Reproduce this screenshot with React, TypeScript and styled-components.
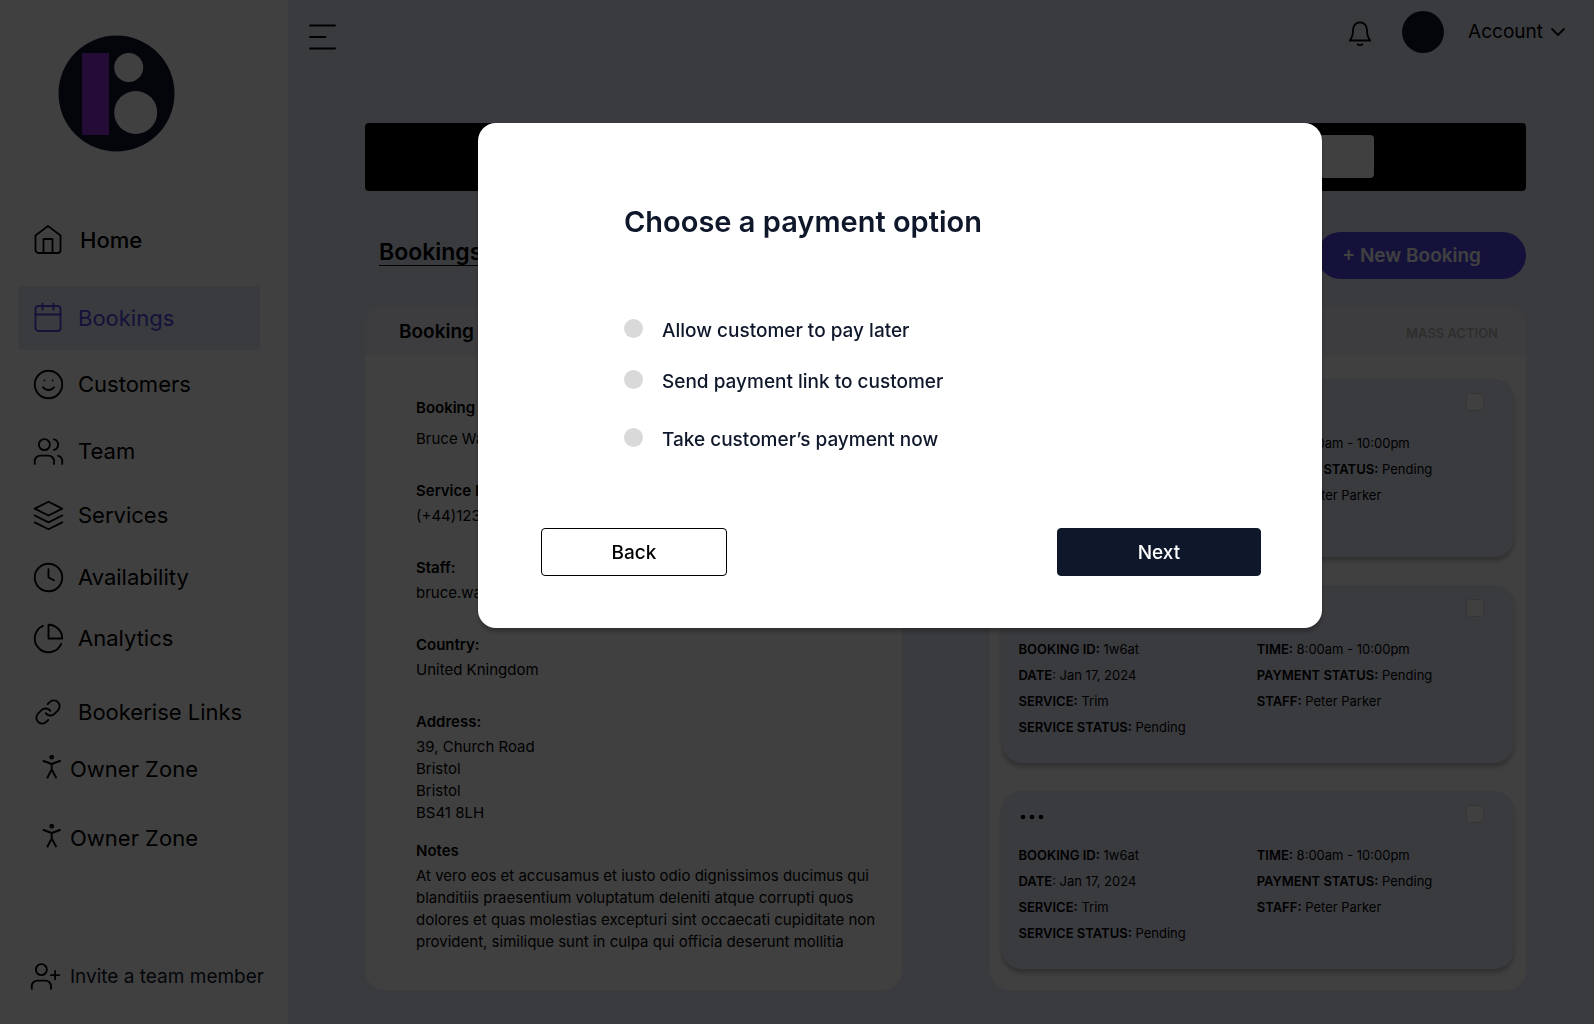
import React, { useState } from "react";
import styled, { createGlobalStyle, css } from "styled-components";
import {
  ChevronDown,
  Clock,
  Link as LinkIcon,
  Smile,
  UserPlus,
  Users,
} from "lucide-react";
import { FiLayers, FiPieChart } from "react-icons/fi";

const color = {
  page: "#e8e9fa",
  surface: "#ffffff",
  header: "#f1f3f9",
  ink: "#000000",
  navy: "#0f172a",
  indigo: "#4f46e5",
  muted: "#b8b8b8",
  radio: "#d9d9d9",
};

const GlobalStyle = createGlobalStyle`
  *, *::before, *::after { box-sizing: border-box; }
  body {
    margin: 0;
    background: ${color.page};
    color: ${color.ink};
    font-family: Inter, "Liberation Sans", sans-serif;
  }
  button { font: inherit; color: inherit; cursor: pointer; }
  h1, h2, p, dl, dd, ul { margin: 0; padding: 0; }
`;

const Shell = styled.div`
  display: flex;
  min-height: 100vh;
`;

/* ---------- Sidebar ---------- */

const Sidebar = styled.aside`
  display: flex;
  flex-direction: column;
  flex: 0 0 288px;
  padding: 35px 0 31px;
  background: ${color.surface};
`;

const LogoLink = styled.a`
  display: block;
  height: 117px;
  margin: 0 0 56px 58px;
`;

const NavList = styled.ul`
  display: grid;
  grid-template-rows: 78px 66px 67px 64px 62px 61px 74px 57px 69px 64px;
  align-items: start;
  margin: 0 28px 0 18px;
  list-style: none;
`;

const NavLink = styled.a<{ $active?: boolean; $strong?: boolean; $compact?: boolean }>`
  display: flex;
  align-items: center;
  gap: 14px;
  height: 64px;
  padding-left: 14px;
  border-radius: 4px;
  color: ${color.ink};
  font-size: 22px;
  white-space: nowrap;
  text-decoration: none;
  ${(p) =>
    p.$strong &&
    css`
      gap: 16px;
      font-weight: 500;
    `}
  ${(p) =>
    p.$active &&
    css`
      background: ${color.page};
      color: ${color.indigo};
    `}
  ${(p) =>
    p.$compact &&
    css`
      gap: 8px;
      padding-left: 24px;
    `}
`;

const NavIcon = styled.span<{ $compact?: boolean }>`
  display: flex;
  align-items: center;
  justify-content: center;
  width: ${(p) => (p.$compact ? 20 : 32)}px;
  flex: none;

  svg {
    flex: none;
  }
`;

const InviteLink = styled.a`
  display: flex;
  align-items: center;
  gap: 8px;
  margin: auto 0 0 29px;
  color: ${color.navy};
  font-size: 19px;
  white-space: nowrap;
  text-decoration: none;

  svg {
    color: ${color.ink};
  }
`;

/* ---------- Main column ---------- */

const Main = styled.div`
  display: flex;
  flex-direction: column;
  flex: 1;
  min-width: 0;
`;

const TopBar = styled.header`
  display: flex;
  align-items: center;
  justify-content: space-between;
  height: 63px;
  padding: 0 24px 0 21px;
`;

const IconButton = styled.button`
  display: flex;
  padding: 0;
  border: 0;
  background: none;
`;

const MenuButton = styled(IconButton)`
  margin-top: 10px;
`;

const TopActions = styled.div`
  display: flex;
  align-items: center;
`;

const Avatar = styled.span`
  width: 42px;
  height: 42px;
  margin: 0 24px 0 28px;
  border-radius: 50%;
  background: ${color.navy};
`;

const AccountButton = styled(IconButton)`
  align-items: center;
  gap: 3px;
  font-size: 19px;
`;

const Content = styled.main`
  padding: 60px 68px 34px 77px;
`;

const Banner = styled.div`
  display: flex;
  align-items: flex-start;
  justify-content: flex-end;
  height: 68px;
  padding: 12px 152px 0 0;
  border-radius: 4px;
  background: ${color.ink};
`;

const SearchInput = styled.input`
  width: 240px;
  height: 43px;
  padding: 0 12px;
  border: 0;
  border-radius: 4px;
  background: ${color.surface};
`;

const TitleRow = styled.div`
  display: flex;
  align-items: center;
  justify-content: space-between;
  padding: 41px 0 27px 14px;
`;

const PageTitle = styled.h1`
  padding-bottom: 8px;
  font-size: 23px;
  line-height: 28px;
  font-weight: 600;
  text-decoration: underline;
  text-decoration-thickness: 1px;
  text-underline-offset: 5px;
`;

const NewBookingButton = styled.button`
  height: 47px;
  padding: 0 45px 0 25px;
  border: 0;
  border-radius: 24px;
  background: ${color.indigo};
  color: ${color.surface};
  font-size: 19px;
  font-weight: 600;
`;

const Columns = styled.div`
  display: grid;
  grid-template-columns: 1fr 1fr;
  gap: 88px;
`;

const Panel = styled.section`
  overflow: hidden;
  border-radius: 20px;
  background: ${color.surface};
`;

const PanelHeader = styled.header`
  display: flex;
  align-items: center;
  justify-content: space-between;
  height: 50px;
  padding: 0 28px 0 34px;
  background: ${color.header};
`;

const PanelTitle = styled.h2`
  font-size: 19px;
  font-weight: 600;
`;

const MassAction = styled.button`
  margin-left: auto;
  padding: 4px 0 0;
  border: 0;
  background: none;
  color: ${color.muted};
  font-size: 13px;
  font-weight: 600;
`;

const Details = styled.dl`
  display: flex;
  flex-direction: column;
  gap: 27px;
  padding: 38px 24px 0 51px;
  font-size: 15px;
`;

const Field = styled.div<{ $spaced?: boolean; $tight?: boolean }>`
  display: flex;
  flex-direction: column;
  gap: ${(p) => (p.$spaced ? 6 : 0)}px;
  margin-top: ${(p) => (p.$tight ? -14 : 0)}px;
`;

const FieldName = styled.dt`
  line-height: 28px;
  font-weight: 600;
`;

const FieldValue = styled.dd`
  line-height: 22px;
  white-space: pre-line;
`;

const CardList = styled.div`
  display: flex;
  flex-direction: column;
  gap: 28px;
  padding: 23px 12px 21px;
`;

const Card = styled.article`
  height: 178px;
  border-radius: 20px;
  background: ${color.page};
  box-shadow: 0 4px 4px rgba(0, 0, 0, 0.25);
`;

const CardTop = styled.div`
  display: flex;
  align-items: flex-start;
  justify-content: space-between;
  height: 51px;
  padding: 14px 30px 0 17px;
`;

const CardCheckbox = styled.input`
  appearance: none;
  width: 18px;
  height: 18px;
  margin: 0;
  border: 1px solid #d4d4d8;
  border-radius: 4px;
  background: ${color.surface};
`;

const CardFacts = styled.div`
  display: grid;
  grid-template-columns: 238fr 257fr;
  padding-left: 17px;
  font-size: 13px;
  line-height: 26px;
  white-space: nowrap;

  b {
    font-weight: 600;
  }
`;

/* ---------- Dialog ---------- */

const Overlay = styled.div`
  position: fixed;
  inset: 0;
  display: flex;
  align-items: flex-start;
  padding: 123px 272px 0 478px;
  background: rgba(0, 0, 0, 0.75);
`;

const Dialog = styled.form`
  flex: 1;
  padding: 79px 61px 52px 63px;
  border-radius: 18px;
  background: ${color.surface};
  color: ${color.navy};
  box-shadow: 0 4px 4px rgba(0, 0, 0, 0.25);
`;

const DialogTitle = styled.h2`
  padding-left: 83px;
  font-size: 29px;
  line-height: 40px;
  font-weight: 600;
`;

const Options = styled.div`
  display: grid;
  grid-template-rows: 51px 58px 30px;
  align-items: start;
  padding: 74px 0 73px 83px;
`;

const Option = styled.label`
  display: flex;
  align-items: center;
  gap: 19px;
  font-size: 19px;
  line-height: 30px;
  font-weight: 500;
`;

const Radio = styled.input`
  appearance: none;
  width: 19px;
  height: 19px;
  margin: 0 0 6px;
  border-radius: 50%;
  background: ${color.radio};

  &:checked {
    background: ${color.navy};
  }
`;

const DialogActions = styled.div`
  display: flex;
  justify-content: space-between;
`;

const DialogButton = styled.button<{ $primary?: boolean }>`
  width: ${(p) => (p.$primary ? 204 : 186)}px;
  height: 48px;
  border: 1px solid ${(p) => (p.$primary ? color.navy : color.ink)};
  border-radius: 4px;
  background: ${(p) => (p.$primary ? color.navy : color.surface)};
  color: ${(p) => (p.$primary ? color.surface : color.ink)};
  font-size: 19px;
  font-weight: 500;
`;

/* ---------- Drawings ---------- */

const Logo = () => (
  <svg width="117" height="117" viewBox="0 0 117 117" aria-hidden="true">
    <circle cx="58.5" cy="58.5" r="58" fill={color.navy} />
    <rect x="24" y="18" width="27" height="82" fill="#9333d8" />
    <circle cx="70.7" cy="32.5" r="14.5" fill="#fff" />
    <circle cx="77.7" cy="77.5" r="21.5" fill="#fff" />
  </svg>
);

const lineArt = {
  fill: "none",
  stroke: "currentColor",
  strokeWidth: 1.8,
  strokeLinecap: "round" as const,
  strokeLinejoin: "round" as const,
  "aria-hidden": true,
};

const HomeIcon = () => (
  <svg width="32" height="32" viewBox="0 0 32 32" {...lineArt}>
    <path d="M3.5 11.5 16 2 28.5 11.5V26a3 3 0 0 1-3 3H6.500a3 3 0 0 1-3-3z" />
    <path d="M11.5 29V15h9v14" />
  </svg>
);

const CalendarIcon = () => (
  <svg width="32" height="32" viewBox="0 0 32 32" {...lineArt}>
    <rect x="3.5" y="4" width="25" height="25" rx="3" />
    <path d="M3.5 12.500h25M10.500 1.500v6M21.500 1.500v6" />
  </svg>
);

const PersonIcon = () => (
  <svg width="20" height="28" viewBox="0 0 20 28" {...lineArt} strokeWidth={1.9}>
    <circle cx="9.700" cy="2.200" r="1.400" />
    <path d="M1.500 6 9.700 9 18 6M9.700 9v6M5.500 22.500 9.700 14.500 14 22.500" />
  </svg>
);

const MenuIcon = () => (
  <svg width="27" height="26" viewBox="0 0 27 26" {...lineArt}>
    <path d="M1 1.500h25M1 13h15.500M1 24.500h25" />
  </svg>
);

const BellIcon = () => (
  <svg width="28" height="28" viewBox="0 0 28 28" {...lineArt}>
    <path d="M3.800 22.500c2.300-2.800 3.300-6 3.300-11a6.900 7.200 0 0 1 13.800 0c0 5 1 8.200 3.300 11z" />
    <path d="M11.800 26.200c1 1.400 3.400 1.400 4.400 0" />
  </svg>
);

const DotsIcon = () => (
  <svg width="25" height="24" viewBox="0 0 25 24" fill="currentColor" aria-hidden="true">
    <circle cx="4" cy="12" r="2.300" />
    <circle cx="13" cy="12" r="2.300" />
    <circle cx="22" cy="12" r="2.300" />
  </svg>
);

/* ---------- Data ---------- */

const stroke = 1.35;

const navItems = [
  { label: "Home", icon: <HomeIcon />, strong: true },
  { label: "Bookings", icon: <CalendarIcon />, active: true },
  { label: "Customers", icon: <Smile size={33} strokeWidth={stroke} /> },
  { label: "Team", icon: <Users size={33} strokeWidth={stroke} /> },
  { label: "Services", icon: <FiLayers size={33} strokeWidth={stroke} /> },
  { label: "Availability", icon: <Clock size={33} strokeWidth={stroke} /> },
  { label: "Analytics", icon: <FiPieChart size={33} strokeWidth={stroke} /> },
  { label: "Bookerise Links", icon: <LinkIcon size={28} strokeWidth={1.6} /> },
  { label: "Owner Zone", icon: <PersonIcon />, compact: true },
  { label: "Owner Zone", icon: <PersonIcon />, compact: true },
];

const fields = [
  { name: "Booking Name:", value: "Bruce Wayne", spaced: true },
  { name: "Service Number:", value: "(+44)1234567890" },
  { name: "Staff:", value: "bruce.wayne@mail.com" },
  { name: "Country:", value: "United Kningdom" },
  { name: "Address:", value: "39, Church Road\nBristol\nBristol\nBS41 8LH" },
  {
    name: "Notes",
    value:
      "At vero eos et accusamus et iusto odio dignissimos ducimus qui blanditiis praesentium voluptatum deleniti atque corrupti quos dolores et quas molestias excepturi sint occaecati cupiditate non provident, similique sunt in culpa qui officia deserunt mollitia",
    tight: true,
  },
];

const paymentOptions = [
  { id: "later", label: "Allow customer to pay later" },
  { id: "link", label: "Send payment link to customer" },
  { id: "now", label: "Take customer’s payment now" },
];

const BookingCard = () => (
  <Card>
    <CardTop>
      <IconButton type="button" aria-label="Booking menu">
        <DotsIcon />
      </IconButton>
      <CardCheckbox type="checkbox" aria-label="Select booking" />
    </CardTop>
    <CardFacts>
      <div>
        <p><b>BOOKING ID:</b> 1w6at</p>
        <p><b>DATE</b>: Jan 17, 2024</p>
        <p><b>SERVICE:</b> Trim</p>
        <p><b>SERVICE STATUS:</b> Pending</p>
      </div>
      <div>
        <p><b>TIME:</b> 8:00am - 10:00pm</p>
        <p><b>PAYMENT STATUS:</b> Pending</p>
        <p><b>STAFF:</b> Peter Parker</p>
      </div>
    </CardFacts>
  </Card>
);

export default function App() {
  const [option, setOption] = useState("");

  return (
    <>
      <GlobalStyle />
      <Shell>
        <Sidebar>
          <LogoLink href="#" aria-label="Bookerise">
            <Logo />
          </LogoLink>
          <nav>
            <NavList>
              {navItems.map((item, i) => (
                <li key={i}>
                  <NavLink
                    href="#"
                    $active={item.active}
                    $strong={item.strong}
                    $compact={item.compact}
                  >
                    <NavIcon $compact={item.compact}>{item.icon}</NavIcon>
                    {item.label}
                  </NavLink>
                </li>
              ))}
            </NavList>
          </nav>
          <InviteLink href="#">
            <UserPlus size={33} strokeWidth={stroke} />
            Invite a team member
          </InviteLink>
        </Sidebar>

        <Main>
          <TopBar>
            <MenuButton type="button" aria-label="Toggle menu">
              <MenuIcon />
            </MenuButton>
            <TopActions>
              <IconButton type="button" aria-label="Notifications">
                <BellIcon />
              </IconButton>
              <Avatar />
              <AccountButton type="button">
                Account
                <ChevronDown size={24} strokeWidth={1.8} />
              </AccountButton>
            </TopActions>
          </TopBar>

          <Content>
            <Banner>
              <SearchInput type="search" aria-label="Search bookings" />
            </Banner>
            <TitleRow>
              <PageTitle>Bookings</PageTitle>
              <NewBookingButton type="button">+ New Booking</NewBookingButton>
            </TitleRow>
            <Columns>
              <Panel>
                <PanelHeader>
                  <PanelTitle>Booking Details</PanelTitle>
                </PanelHeader>
                <Details>
                  {fields.map((f) => (
                    <Field key={f.name} $spaced={f.spaced} $tight={f.tight}>
                      <FieldName>{f.name}</FieldName>
                      <FieldValue>{f.value}</FieldValue>
                    </Field>
                  ))}
                </Details>
              </Panel>
              <Panel>
                <PanelHeader>
                  <MassAction type="button">MASS ACTION</MassAction>
                </PanelHeader>
                <CardList>
                  <BookingCard />
                  <BookingCard />
                  <BookingCard />
                </CardList>
              </Panel>
            </Columns>
          </Content>
        </Main>
      </Shell>

      <Overlay>
        <Dialog
          role="dialog"
          aria-modal="true"
          aria-labelledby="payment-title"
          onSubmit={(e) => e.preventDefault()}
        >
          <DialogTitle id="payment-title">Choose a payment option</DialogTitle>
          <Options role="radiogroup" aria-labelledby="payment-title">
            {paymentOptions.map((o) => (
              <Option key={o.id} htmlFor={o.id}>
                <Radio
                  type="radio"
                  id={o.id}
                  name="payment"
                  checked={option === o.id}
                  onChange={() => setOption(o.id)}
                />
                {o.label}
              </Option>
            ))}
          </Options>
          <DialogActions>
            <DialogButton type="button">Back</DialogButton>
            <DialogButton type="submit" $primary>
              Next
            </DialogButton>
          </DialogActions>
        </Dialog>
      </Overlay>
    </>
  );
}
